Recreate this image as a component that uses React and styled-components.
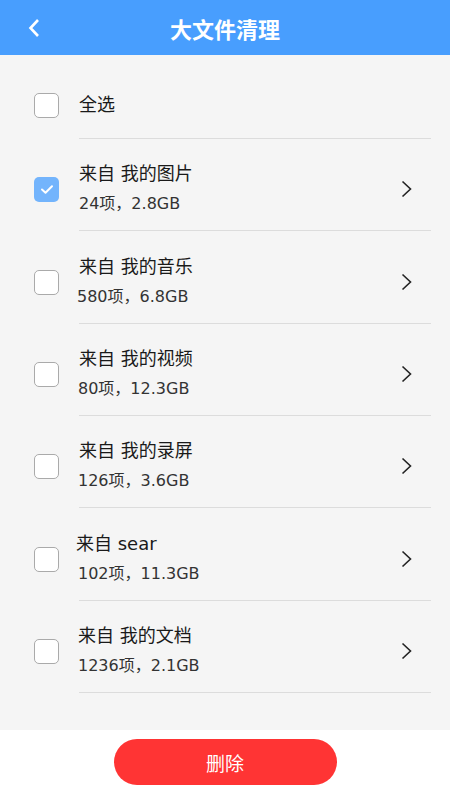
import React, { useState } from "react"
import styled, { createGlobalStyle } from "styled-components"

const GlobalStyle = createGlobalStyle`
  html, body {
    margin: 0;
    padding: 0;
  }
  body {
    font-family: "DejaVu Sans", "Noto Sans CJK SC", sans-serif;
    background: #f5f5f5;
  }
`

const Page = styled.div`
  display: flex;
  flex-direction: column;
  height: 100vh;
  background: #f5f5f5;
`

const Header = styled.header`
  position: relative;
  display: flex;
  align-items: center;
  justify-content: center;
  height: 55px;
  flex-shrink: 0;
  background: #489efe;
`

const BackButton = styled.button`
  position: absolute;
  left: 22px;
  top: 14px;
  width: 24px;
  height: 28px;
  padding: 0;
  border: 0;
  background: none;
  display: flex;
  align-items: center;
  justify-content: center;
`

const Title = styled.h1`
  margin: 0;
  color: #fff;
  font-size: 22px;
  font-weight: 700;
  font-family: "Noto Sans CJK SC", sans-serif;
  line-height: 30px;
`

const List = styled.div`
  flex: 1;
`

const Row = styled.div`
  display: flex;
  align-items: center;
  padding-top: ${props => props.$top}px;
  padding-left: 34px;
`

const Box = styled.span`
  flex-shrink: 0;
  box-sizing: border-box;
  width: 25px;
  height: 25px;
  margin-right: 20px;
  border-radius: 5px;
  display: flex;
  align-items: center;
  justify-content: center;
  background: ${props => (props.$checked ? "#73b4fc" : "#fff")};
  border: ${props => (props.$checked ? "none" : "1px solid #aaa")};
`

const Content = styled.div`
  flex: 1;
  display: flex;
  align-items: center;
  margin-right: 19px;
  padding: ${props => props.$pad}px 18px ${props => props.$pad}px 0;
  border-bottom: 1px solid #dcdcdc;
`

const Texts = styled.div`
  flex: 1;
  display: flex;
  flex-direction: column;
  gap: 4px;
`

const Name = styled.div`
  font-size: 18px;
  line-height: 26px;
  color: #1a1a1a;
  margin-left: ${props => props.$shift || 0}px;
`

const Meta = styled.div`
  font-size: 16px;
  line-height: 26px;
  color: #333;
  margin-left: ${props => props.$shift || 0}px;
`

const Footer = styled.footer`
  flex-shrink: 0;
  height: 70px;
  background: #fff;
  display: flex;
  justify-content: center;
  padding-top: 9px;
  box-sizing: border-box;
`

const DeleteButton = styled.button`
  width: 223px;
  height: 46px;
  border: 0;
  border-radius: 23px;
  background: #ff3434;
  color: #fff;
  font-size: 19px;
  font-family: "Noto Sans CJK SC", sans-serif;
`

const Check = () => (
  <svg width="14" height="11" viewBox="0 0 14 11">
    <path d="M2 5.5l3.5 3.2L12 2.2" fill="none" stroke="#fff" strokeWidth="2" strokeLinecap="round" strokeLinejoin="round" />
  </svg>
)

const Chevron = () => (
  <svg width="12" height="18" viewBox="0 0 12 18">
    <path d="M1.5 1.5l8 7.5-8 7.5" fill="none" stroke="#222" strokeWidth="1.6" />
  </svg>
)

const items = [
  { name: "来自 我的图片", meta: "24项，2.8GB", checked: true },
  { name: "来自 我的音乐", meta: "580项，6.8GB", metaShift: -2 },
  { name: "来自 我的视频", meta: "80项，12.3GB", metaShift: -1 },
  { name: "来自 我的录屏", meta: "126项，3.6GB", metaShift: -1 },
  { name: "来自 sear", meta: "102项，11.3GB", nameShift: -3, metaShift: -1 },
  { name: "来自 我的文档", meta: "1236项，2.1GB", nameShift: -1, metaShift: -1 },
]

export default function App() {
  const [checked, setChecked] = useState(items.map(i => !!i.checked))
  const all = checked.every(Boolean)

  const toggle = idx =>
    setChecked(prev => prev.map((c, i) => (i === idx ? !c : c)))

  return (
    <Page>
      <GlobalStyle />
      <Header>
        <BackButton aria-label="返回">
          <svg width="12" height="20" viewBox="0 0 12 20">
            <path d="M10 2L2.5 10l7.5 8" fill="none" stroke="#fff" strokeWidth="2.6" />
          </svg>
        </BackButton>
        <Title>大文件清理</Title>
      </Header>
      <List>
        <Row $top={17}>
          <Box $checked={all} onClick={() => setChecked(items.map(() => !all))}>
            {all && <Check />}
          </Box>
          <Content $pad={20}>
            <Texts>
              <Name>全选</Name>
            </Texts>
          </Content>
        </Row>
        {items.map((item, i) => (
          <Row key={item.name} $top={9.33}>
            <Box $checked={checked[i]} onClick={() => toggle(i)}>
              {checked[i] && <Check />}
            </Box>
            <Content $pad={13}>
              <Texts>
                <Name $shift={item.nameShift}>{item.name}</Name>
                <Meta $shift={item.metaShift}>{item.meta}</Meta>
              </Texts>
              <Chevron />
            </Content>
          </Row>
        ))}
      </List>
      <Footer>
        <DeleteButton>删除</DeleteButton>
      </Footer>
    </Page>
  )
}
